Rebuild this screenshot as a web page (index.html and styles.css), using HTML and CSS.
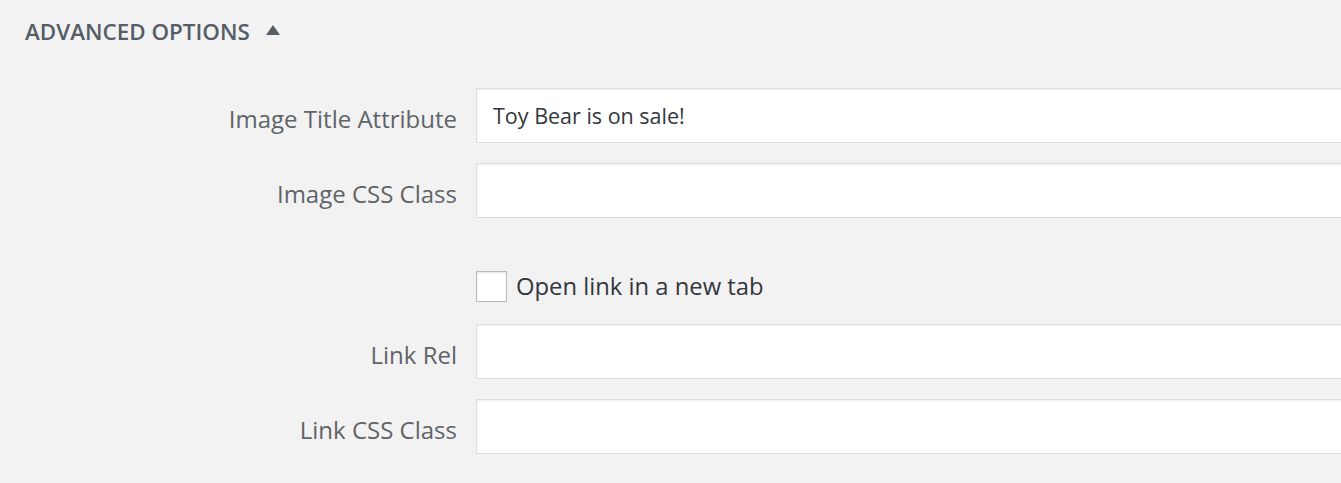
FILE: index.html
```html
<!DOCTYPE html>
<html>
<head>
<meta charset="utf-8">
<link rel="stylesheet" href="styles.css">
</head>
<body>
<div class="panel">
  <h2 class="toggle">ADVANCED OPTIONS <span class="arrow"></span></h2>
  <div class="form">
    <label class="lbl">Image Title Attribute</label>
    <div class="field"><input class="txt" type="text" value="Toy Bear is on sale!"></div>
    <label class="lbl">Image CSS Class</label>
    <div class="field"><input class="txt" type="text" value=""></div>
    <div class="spacer"></div>
    <div class="check"><span class="box"></span><span class="check-text">Open link in a new tab</span></div>
    <label class="lbl">Link Rel</label>
    <div class="field"><input class="txt" type="text" value=""></div>
    <label class="lbl">Link CSS Class</label>
    <div class="field"><input class="txt" type="text" value=""></div>
  </div>
</div>
</body>
</html>
```
FILE: styles.css
```css
html, body {
  margin: 0;
  padding: 0;
  background: #f2f2f2;
  overflow: hidden;
}
body {
  font-family: "Open Sans", "Noto Sans", sans-serif;
  color: #555d66;
}
.panel {
  width: 1400px;
  padding: 16px 0 0 25px;
}
.toggle {
  margin: 0;
  font-size: 22.4px;
  font-weight: 600;
  color: #555d66;
  line-height: 32px;
  display: flex;
  align-items: center;
  gap: 16px;
}
.arrow {
  width: 0;
  height: 0;
  border-left: 7px solid transparent;
  border-right: 7px solid transparent;
  border-bottom: 10px solid #555d66;
  margin-top: -5px;
}
.form {
  margin-top: 40px;
  display: grid;
  grid-template-columns: 432px 1fr;
  column-gap: 19px;
  row-gap: 20px;
}
.lbl {
  text-align: right;
  font-size: 24px;
  line-height: 55px;
  height: 55px;
  padding-top: 3px;
  box-sizing: border-box;
  color: #5f6468;
}
.field {
  height: 55px;
}
.txt {
  box-sizing: border-box;
  width: 100%;
  height: 55px;
  border: 1px solid #dddddd;
  box-shadow: inset 0 1px 2px rgba(0,0,0,0.07);
  background: #fff;
  margin: 0;
  padding: 0 16px;
  font-family: "Open Sans", "Noto Sans", sans-serif;
  font-size: 21.5px;
  color: #32373c;
  outline: none;
}
.spacer { height: 66px; }
.check {
  display: flex;
  align-items: flex-end;
  gap: 9px;
  height: 66px;
  box-sizing: border-box;
  padding-bottom: 2px;
}
.box {
  box-sizing: border-box;
  width: 31px;
  height: 31px;
  border: 1px solid #b4b9be;
  background: #fff;
  box-shadow: inset 0 1px 2px rgba(0,0,0,0.1);
}
.check-text {
  font-size: 23.8px;
  line-height: 31px;
  color: #32373c;
}
```
